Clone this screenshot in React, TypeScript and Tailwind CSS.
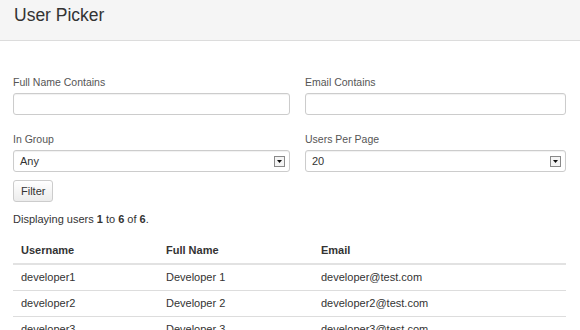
import React from 'react';

const users = [
  { username: 'developer1', fullName: 'Developer 1', email: 'developer@test.com' },
  { username: 'developer2', fullName: 'Developer 2', email: 'developer2@test.com' },
  { username: 'developer3', fullName: 'Developer 3', email: 'developer3@test.com' },
];

const TextField: React.FC<{ label: string }> = ({ label }) => (
  <div className="flex flex-col">
    <label className="text-[10.5px] leading-[14px] text-[#555] mb-[4px]">{label}</label>
    <input className="h-[22px] w-full rounded-[3px] border border-[#ccc] bg-white shadow-[inset_0_1px_1px_rgba(0,0,0,0.06)] outline-none" />
  </div>
);

const SelectField: React.FC<{ label: string; value: string }> = ({ label, value }) => (
  <div className="flex flex-col">
    <label className="text-[10.5px] leading-[14px] text-[#555] mb-[4px]">{label}</label>
    <div className="h-[22px] w-full rounded-[3px] border border-[#ccc] bg-white flex items-center justify-between pl-[6px] pr-[4px] shadow-[inset_0_1px_1px_rgba(0,0,0,0.06)]">
      <span className="text-[11px] text-[#333]">{value}</span>
      {/* windows-style dropdown arrow box */}
      <div className="w-[11px] h-[11px] border border-[#888] bg-[#f4f4f4] flex items-center justify-center">
        <svg width="5" height="3" viewBox="0 0 5 3">
          <path d="M0 0h5L2.5 3z" fill="#111" />
        </svg>
      </div>
    </div>
  </div>
);

export default function App() {
  return (
    <div className="w-[580px] h-[330px] overflow-hidden bg-white font-['Liberation_Sans',Arial,sans-serif] text-[#333]">
      <div className="h-[41px] bg-[#f5f5f5] border-b border-[#dcdcdc] px-[14px] pt-[3px]">
        <h1 className="text-[17.5px] leading-[24px] text-[#333]">User Picker</h1>
      </div>

      <div className="px-[13px] pr-[14px] pt-[34px]">
        <div className="grid grid-cols-[277px_261px] gap-x-[15px] gap-y-[17px]">
          <TextField label="Full Name Contains" />
          <TextField label="Email Contains" />
          <SelectField label="In Group" value="Any" />
          <SelectField label="Users Per Page" value="20" />
        </div>

        <button className="mt-[8px] h-[22px] px-[7px] rounded-[3px] border border-[#ccc] bg-gradient-to-b from-white to-[#ececec] text-[11px] text-[#333]">
          Filter
        </button>

        <p className="mt-[10px] text-[11px] leading-[14px]">
          Displaying users <b>1</b> to <b>6</b> of <b>6</b>.
        </p>

        <table className="mt-[12px] w-full border-collapse text-[11px] text-left">
          <thead>
            <tr className="border-b-2 border-[#e2e2e2]">
              <th className="w-[145px] pl-[8px] h-[26px] font-bold">Username</th>
              <th className="w-[155px] pl-[8px] font-bold">Full Name</th>
              <th className="pl-[8px] font-bold">Email</th>
            </tr>
          </thead>
          <tbody>
            {users.map((u) => (
              <tr key={u.username} className="border-b border-[#ddd]">
                <td className="pl-[8px] h-[26px]">{u.username}</td>
                <td className="pl-[8px]">{u.fullName}</td>
                <td className="pl-[8px]">{u.email}</td>
              </tr>
            ))}
          </tbody>
        </table>
      </div>
    </div>
  );
}
